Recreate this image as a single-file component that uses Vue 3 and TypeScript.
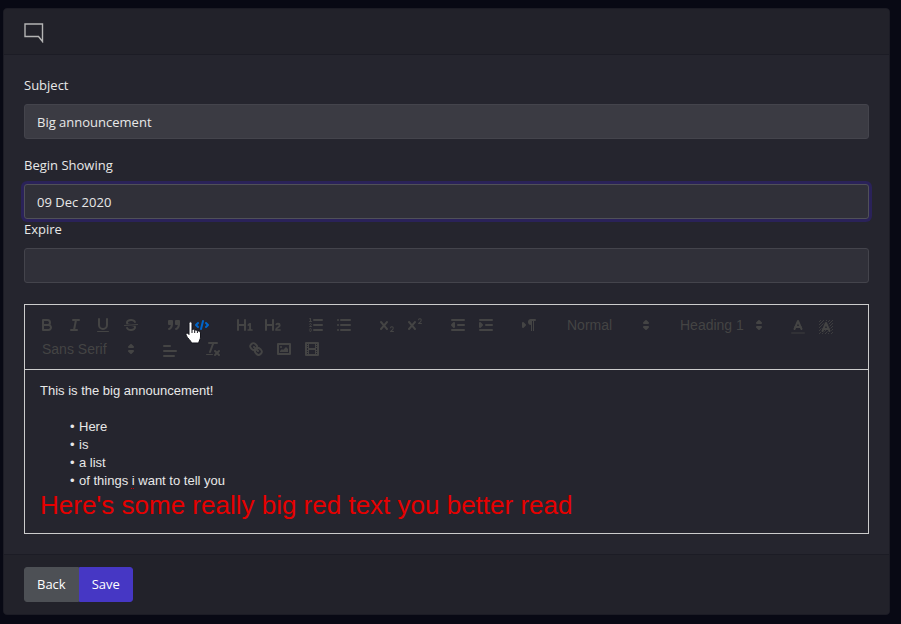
<script setup lang="ts">
import { ref } from 'vue'

interface ToolButton {
  kind: 'button'
  name: string
  label: string
  active?: boolean
  low?: boolean
}
interface ToolPicker {
  kind: 'picker'
  name: string
  label: string
  options: string[]
  wide?: boolean
}
type Tool = ToolButton | ToolPicker

const line = (x1: number, y1: number, x2: number, y2: number, cls = 's') =>
  `<line class="${cls}" x1="${x1}" y1="${y1}" x2="${x2}" y2="${y2}"/>`
const rect = (x: number, y: number, w: number, h: number, cls = 'f', rx = 0) =>
  `<rect class="${cls}" x="${x}" y="${y}" width="${w}" height="${h}" rx="${rx}"/>`
const path = (d: string, cls = 's') => `<path class="${cls}" d="${d}"/>`

const cross =
  'M9.65,5.241a1,1,0,0,0-1.409.108L6,7.964,3.759,5.349A1,1,0,0,0,2.192,6.59178Q2.21541,6.6213,2.241,6.649L4.684,9.5,2.241,12.35A1,1,0,0,0,3.71,13.70722q0.02557-.02768.049-0.05722L6,11.036,8.241,13.65a1,1,0,1,0,1.567-1.24277Q9.78459,12.3777,9.759,12.35L7.316,9.5,9.759,6.651A1,1,0,0,0,9.65,5.241Z'
const smallTwo =
  'M15.5,15H13.861a3.858,3.858,0,0,0,1.914-2.975,1.8,1.8,0,0,0-1.6-1.751A1.921,1.921,0,0,0,12.021,11.7a0.50013,0.50013,0,1,0,.957.291h0a0.914,0.914,0,0,1,1.053-.725,0.81,0.81,0,0,1,.744.762c0,1.076-1.16971,1.86982-1.93971,2.43082A1.45639,1.45639,0,0,0,12,15.5a0.5,0.5,0,0,0,.5.5h3A0.5,0.5,0,0,0,15.5,15Z'

// Diagonal hatching behind the highlight letter, clipped to the square 2..16
const hatch = [6, 9, 12, 15, 18, 21, 24, 27, 30]
  .map((sum) => {
    const low = Math.max(2, sum - 16)
    const high = Math.min(16, sum - 2)
    return line(low, high, high, low, 'h')
  })
  .join('')

const icons: Record<string, string> = {
  bold:
    path('M5,4H9.5A2.5,2.5,0,0,1,12,6.5v0A2.5,2.5,0,0,1,9.5,9H5Z') +
    path('M5,9h5.5A2.5,2.5,0,0,1,13,11.5v0A2.5,2.5,0,0,1,10.5,14H5Z'),
  italic: line(7, 4, 13, 4) + line(5, 14, 11, 14) + line(8, 14, 10, 4),
  underline: path('M5,3V9a4.012,4.012,0,0,0,4,4H9a4.012,4.012,0,0,0,4-4V3') + rect(3, 15, 12, 1, 'f', 0.5),
  strike:
    line(15.5, 8.5, 2.5, 9.5, 't') +
    path('M9.007,8C6.542,7.791,6,7.519,6,6.5,6,5.792,7.283,5,9,5c1.571,0,2.765.679,2.969,1.309a1,1,0,0,0,1.9-.617C13.356,4.106,11.354,3,9,3,6.2,3,4,4.538,4,6.5a3.2,3.2,0,0,0,.5,1.843Z', 'f') +
    path('M8.984,10C11.457,10.208,12,10.479,12,11.5c0,0.708-1.283,1.5-3,1.5-1.571,0-2.765-.679-2.969-1.309a1,1,0,1,0-1.9.617C4.644,13.894,6.646,15,9,15c2.8,0,5-1.538,5-3.5a3.2,3.2,0,0,0-.5-1.843Z', 'f'),
  quote:
    rect(4, 5, 3, 3, 's f') + rect(11, 5, 3, 3, 's f') +
    path('M7,8c0,4.031-3,5-3,5', 's f') + path('M14,8c0,4.031-3,5-3,5', 's f'),
  code: path('M5,7L3,9L5,11') + path('M13,7L15,9L13,11') + line(10, 5, 8, 13),
  h1: path('M10,4V14a1,1,0,0,1-2,0V10H3v4a1,1,0,0,1-2,0V4A1,1,0,0,1,3,4V8H8V4a1,1,0,0,1,2,0Zm6.06787,9.209H14.98975V7.59863a.54085.54085,0,0,0-.605-.60547h-.62744a1.01119,1.01119,0,0,0-.748.29688L11.645,8.56641a.5435.5435,0,0,0-.022.8584l.28613.30762a.53861.53861,0,0,0,.84717.0332l.09912-.08789a1.2137,1.2137,0,0,0,.2417-.35254h.02246s-.01123.30859-.01123.60547V13.209H12.041a.54085.54085,0,0,0-.605.60547v.43945a.54085.54085,0,0,0,.605.60547h4.02686a.54085.54085,0,0,0,.605-.60547v-.43945A.54085.54085,0,0,0,16.06787,13.209Z', 'f'),
  h2: path('M16.73975,13.81445v.43945a.54085.54085,0,0,1-.605.60547H11.855a.58392.58392,0,0,1-.64893-.60547V14.0127c0-2.90527,3.39941-3.42187,3.39941-4.55469a.77675.77675,0,0,0-.84717-.78125,1.17684,1.17684,0,0,0-.83594.38477c-.2749.26367-.561.374-.85791.13184l-.4292-.34082c-.30811-.24219-.38525-.51758-.1543-.81445a2.97155,2.97155,0,0,1,2.45361-1.17676,2.45393,2.45393,0,0,1,2.68408,2.40918c0,2.45312-3.1792,2.92676-3.27832,3.93848h2.79443A.54085.54085,0,0,1,16.73975,13.81445ZM9,3A.99974.99974,0,0,0,8,4V8H3V4A1,1,0,0,0,1,4V14a1,1,0,0,0,2,0V10H8v4a1,1,0,0,0,2,0V4A.99974.99974,0,0,0,9,3Z', 'f'),
  ordered:
    line(7, 4, 15, 4) + line(7, 9, 15, 9) + line(7, 14, 15, 14) + line(2.5, 5.5, 4.5, 5.5, 't') +
    path('M3.5,6A0.5,0.5,0,0,1,3,5.5V3.085l-0.276.138A0.5,0.5,0,0,1,2.053,3c-0.124-.247-0.023-0.324.224-0.447l1-.5A0.5,0.5,0,0,1,4,2.5v3A0.5,0.5,0,0,1,3.5,6Z', 'f') +
    path('M4.5,10.5h-2c0-.234,1.85-1.076,1.85-2.234A0.959,0.959,0,0,0,2.5,8.156', 't') +
    path('M2.5,14.846a0.959,0.959,0,0,0,1.85-.109A0.7,0.7,0,0,0,3.75,14a0.688,0.688,0,0,0,.6-0.736,0.959,0.959,0,0,0-1.85-.109', 't'),
  bullet:
    line(6, 4, 15, 4) + line(6, 9, 15, 9) + line(6, 14, 15, 14) +
    line(3, 4, 3, 4) + line(3, 9, 3, 9) + line(3, 14, 3, 14),
  sub: path(smallTwo, 'f') + path(cross, 'f'),
  super: `<g transform="translate(0 -8)">${path(smallTwo, 'f')}</g>` + path(cross, 'f'),
  outdent: line(3, 14, 15, 14) + line(3, 4, 15, 4) + line(9, 9, 15, 9) + path('M5,7V11L3,9Z', 's f'),
  indent: line(3, 14, 15, 14) + line(3, 4, 15, 4) + line(9, 9, 15, 9) + path('M3,7V11L5,9Z', 's f'),
  direction:
    path('M3,11L5,9L3,7Z', 's f') + line(15, 4, 11, 4) + path('M11,3a3,3,0,0,0,0,6h1V3H11Z', 'f') +
    rect(11, 4, 1, 11) + rect(13, 4, 1, 11),
  color: `<g opacity="0.4">${line(3, 15, 15, 15)}</g>` + path('M5.5,11L9,3L12.5,11') + line(11.63, 9, 6.38, 9),
  background:
    hatch + path('M5.5,13L9,5L12.5,13', 'halo') +
    path('M5.5,13L9,5L12.5,13') + line(11.63, 11, 6.38, 11),
  align: line(3, 9, 15, 9) + line(3, 14, 13, 14) + line(3, 4, 9, 4),
  clean:
    line(5, 3, 13, 3) + line(6, 12, 9.35, 3) + line(11, 11, 15, 15) + line(15, 11, 11, 15) +
    rect(2, 14, 7, 1, 'f', 0.5),
  link:
    line(7, 7, 11, 11) +
    path('M8.9,4.577a3.476,3.476,0,0,1,.36,4.679A3.476,3.476,0,0,1,4.577,8.9C3.185,7.5,2.035,6.4,4.217,4.217S7.5,3.185,8.9,4.577Z') +
    path('M13.423,9.1a3.476,3.476,0,0,0-4.679-.36,3.476,3.476,0,0,0,.36,4.679c1.392,1.392,2.5,2.542,4.679.36S14.815,10.5,13.423,9.1Z'),
  image:
    rect(3, 4, 12, 10, 's') + '<circle class="f" cx="6" cy="7" r="1"/>' +
    path('M5,12V11L7,9L8,10L11,7L13,9V12Z', 'f'),
  video:
    rect(3, 3, 12, 12, 's') + rect(5, 3, 1, 12) + rect(12, 3, 1, 12) + rect(5, 8, 8, 2) +
    [5, 7, 10, 12].map((y) => rect(3, y, 3, 1) + rect(12, y, 3, 1)).join(''),
  arrows: path('M7,11L9,13L11,11Z', 's f') + path('M7,7L9,5L11,7Z', 's f'),
}

const button = (name: string, label: string, extra: Partial<ToolButton> = {}): ToolButton => ({
  kind: 'button',
  name,
  label,
  ...extra,
})

const groups: Tool[][] = [
  [button('bold', 'Bold'), button('italic', 'Italic'), button('underline', 'Underline'), button('strike', 'Strike')],
  [button('quote', 'Block quote'), button('code', 'Code block', { active: true })],
  [button('h1', 'Heading 1'), button('h2', 'Heading 2')],
  [button('ordered', 'Ordered list'), button('bullet', 'Bullet list')],
  [button('sub', 'Subscript'), button('super', 'Superscript')],
  [button('outdent', 'Outdent'), button('indent', 'Indent')],
  [button('direction', 'Text direction')],
  [{ kind: 'picker', name: 'size', label: 'Size', options: ['Normal', 'Small', 'Large', 'Huge'] }],
  [{ kind: 'picker', name: 'header', label: 'Heading', options: ['Heading 1', 'Heading 2', 'Heading 3', 'Normal'] }],
  [button('color', 'Text color', { low: true }), button('background', 'Background color', { low: true })],
  [{ kind: 'picker', name: 'font', label: 'Font', options: ['Sans Serif', 'Serif', 'Monospace'], wide: true }],
  [button('align', 'Align', { low: true })],
  [button('clean', 'Clear formatting')],
  [button('link', 'Link'), button('image', 'Image'), button('video', 'Video')],
]

const subject = ref('Big announcement')
const begin = ref('09 Dec 2020')
const expire = ref('')
</script>

<template>
  <main class="page">
    <form class="card" @submit.prevent>
      <header class="card-header">
        <svg class="comment" viewBox="0 0 20 20" aria-hidden="true">
          <path d="M1 1H18.500V18.500L14.500 13.500H1Z" />
        </svg>
      </header>

      <div class="card-body">
        <div class="field spaced">
          <label for="subject">Subject</label>
          <input id="subject" v-model="subject" class="filled" type="text" />
        </div>
        <div class="field">
          <label for="begin">Begin Showing</label>
          <input id="begin" v-model="begin" class="current" type="text" />
        </div>
        <div class="field">
          <label for="expire">Expire</label>
          <input id="expire" v-model="expire" type="text" />
        </div>

        <section class="editor">
          <div class="toolbar" role="toolbar" aria-label="Formatting">
            <div v-for="(group, i) in groups" :key="i" class="group">
              <template v-for="tool in group" :key="tool.name">
                <button
                  v-if="tool.kind === 'button'"
                  type="button"
                  class="tool"
                  :class="{ active: tool.active, low: tool.low }"
                  :aria-label="tool.label"
                >
                  <svg class="glyph" viewBox="0 0 18 18" v-html="icons[tool.name]"></svg>
                  <svg v-if="tool.active" class="pointer" viewBox="0 0 17 24">
                    <path
                      d="M4 2.500C4 .3 7 .3 7 2.500V9C7.300 7.800 9.600 8 9.700 9.500C10.200 8.500 12.300 8.900 12.400 10.300C13.200 9.500 15.500 10 15.500 12V16C15.500 18.500 14 19.500 13.700 22H6.500C6 19.500 2.500 17.500 1 14C.4 12 2.500 11.300 4 13.500Z"
                    />
                    <path class="creases" d="M7 9V12M9.700 9.500V12M12.400 10.300V12" />
                  </svg>
                </button>
                <label v-else class="picker" :class="{ wide: tool.wide }">
                  <select :aria-label="tool.label">
                    <option v-for="option in tool.options" :key="option">{{ option }}</option>
                  </select>
                  <svg class="glyph" viewBox="0 0 18 18" v-html="icons.arrows"></svg>
                </label>
              </template>
            </div>
          </div>

          <div class="content" contenteditable="true" spellcheck="false" role="textbox" aria-label="Message">
            <p>This is the big announcement!</p>
            <p><br /></p>
            <ul>
              <li>Here</li>
              <li>is</li>
              <li>a list</li>
              <li>of things <span class="typo">i</span> want to tell you</li>
            </ul>
            <p class="huge">Here's some really big red text you better read</p>
          </div>
        </section>
      </div>

      <footer class="card-footer">
        <button type="button" class="btn back">Back</button>
        <button type="submit" class="btn save">Save</button>
      </footer>
    </form>
  </main>
</template>

<style>
body {
  background: #080914;
}
</style>

<style scoped>
* {
  box-sizing: border-box;
}

.page {
  padding: 8px 11px 9px 3px;
  font: 13px/21px "Segoe UI", "Open Sans", "Noto Sans", sans-serif;
  color: #e8e8e8;
}

.card {
  border: 1px solid #1c1c25;
  border-radius: 4px;
  background: #25252e;
  overflow: hidden;
}

.card-header {
  padding: 14px 20px 11px;
  background: #22222a;
  border-bottom: 1px solid #1c1c25;
}

.comment {
  display: block;
  width: 20px;
  height: 20px;
  fill: none;
  stroke: #b4b4b4;
  stroke-width: 1.4;
}

.card-body {
  padding: 20px;
}

.field {
  display: flex;
  flex-direction: column;
  gap: 8px;
}

.spaced {
  margin-bottom: 16px;
}

.field input {
  width: 100%;
  padding: 6px 12px;
  border: 1px solid #44444c;
  border-radius: 3px;
  background: #303039;
  color: #e8e8e8;
  font: inherit;
  height: 35px;
  outline: none;
}

.field input.filled {
  background: #3b3b43;
}

.field input.current {
  border-color: #505058;
  box-shadow: 0 0 0 3px #2a2259;
}

.editor {
  margin-top: 21px;
  border: 1px solid #cccccc;
  font-family: "Liberation Sans", Arial, sans-serif;
}

.toolbar {
  display: flex;
  flex-wrap: wrap;
  column-gap: 15px;
  padding: 8px;
  border-bottom: 1px solid #cccccc;
}

.group {
  display: flex;
}

.tool {
  position: relative;
  width: 28px;
  height: 24px;
  padding: 3px 5px;
  border: 0;
  background: none;
  color: #444444;
}

.tool.low {
  padding: 5px 5px 1px;
}

.tool.active {
  color: #0066cc;
}

.glyph {
  display: block;
  width: 18px;
  height: 18px;
}

.glyph :deep(.s),
.glyph :deep(.t),
.glyph :deep(.h),
.glyph :deep(.halo) {
  fill: none;
  stroke: currentColor;
  stroke-width: 2;
  stroke-linecap: round;
  stroke-linejoin: round;
}

.glyph :deep(.t) {
  stroke-width: 1;
}

.glyph :deep(.h) {
  stroke-width: 0.8;
  stroke-linecap: butt;
}

.glyph :deep(.halo) {
  stroke: #25252e;
  stroke-width: 4;
}

.glyph :deep(.f) {
  fill: currentColor;
}

.pointer {
  position: absolute;
  left: -3px;
  top: 8px;
  z-index: 1;
  width: 17px;
  height: 24px;
  fill: #ffffff;
  stroke: #15151c;
  stroke-width: 1;
}

.pointer .creases {
  fill: none;
}

.picker {
  position: relative;
  display: flex;
  align-items: center;
  width: 98px;
  height: 24px;
  color: #444444;
}

.picker.wide {
  width: 108px;
}

.picker select {
  appearance: none;
  width: 100%;
  height: 24px;
  padding: 0 20px 0 9px;
  border: 0;
  background: none;
  color: inherit;
  font: 14px/24px "Liberation Sans", Arial, sans-serif;
}

.picker .glyph {
  position: absolute;
  right: 1px;
  pointer-events: none;
}

.content {
  padding: 12px 15px;
  font-size: 13px;
  line-height: 18px;
  outline: none;
}

.content p,
.content ul {
  margin: 0;
}

.content ul {
  padding: 0 0 0 30px;
  list-style: none;
}

.content li::before {
  content: "•";
  display: inline-block;
  width: 9px;
}

.typo {
  text-decoration: underline dotted #d00000 1px;
  text-underline-offset: 3px;
}

.content .huge {
  color: #e60000;
  font-size: 26px;
  line-height: 31px;
}

.card-footer {
  display: flex;
  padding: 12px 20px;
  background: #22222a;
  border-top: 1px solid #1c1c25;
}

.btn {
  height: 35px;
  padding: 0 12px;
  border: 1px solid transparent;
  color: #ffffff;
  font: inherit;
}

.back {
  border-radius: 3px 0 0 3px;
  background: #4d5055;
  border-color: #4d5055;
}

.save {
  border-radius: 0 3px 3px 0;
  background: #4637c4;
  border-color: #4637c4;
}
</style>
